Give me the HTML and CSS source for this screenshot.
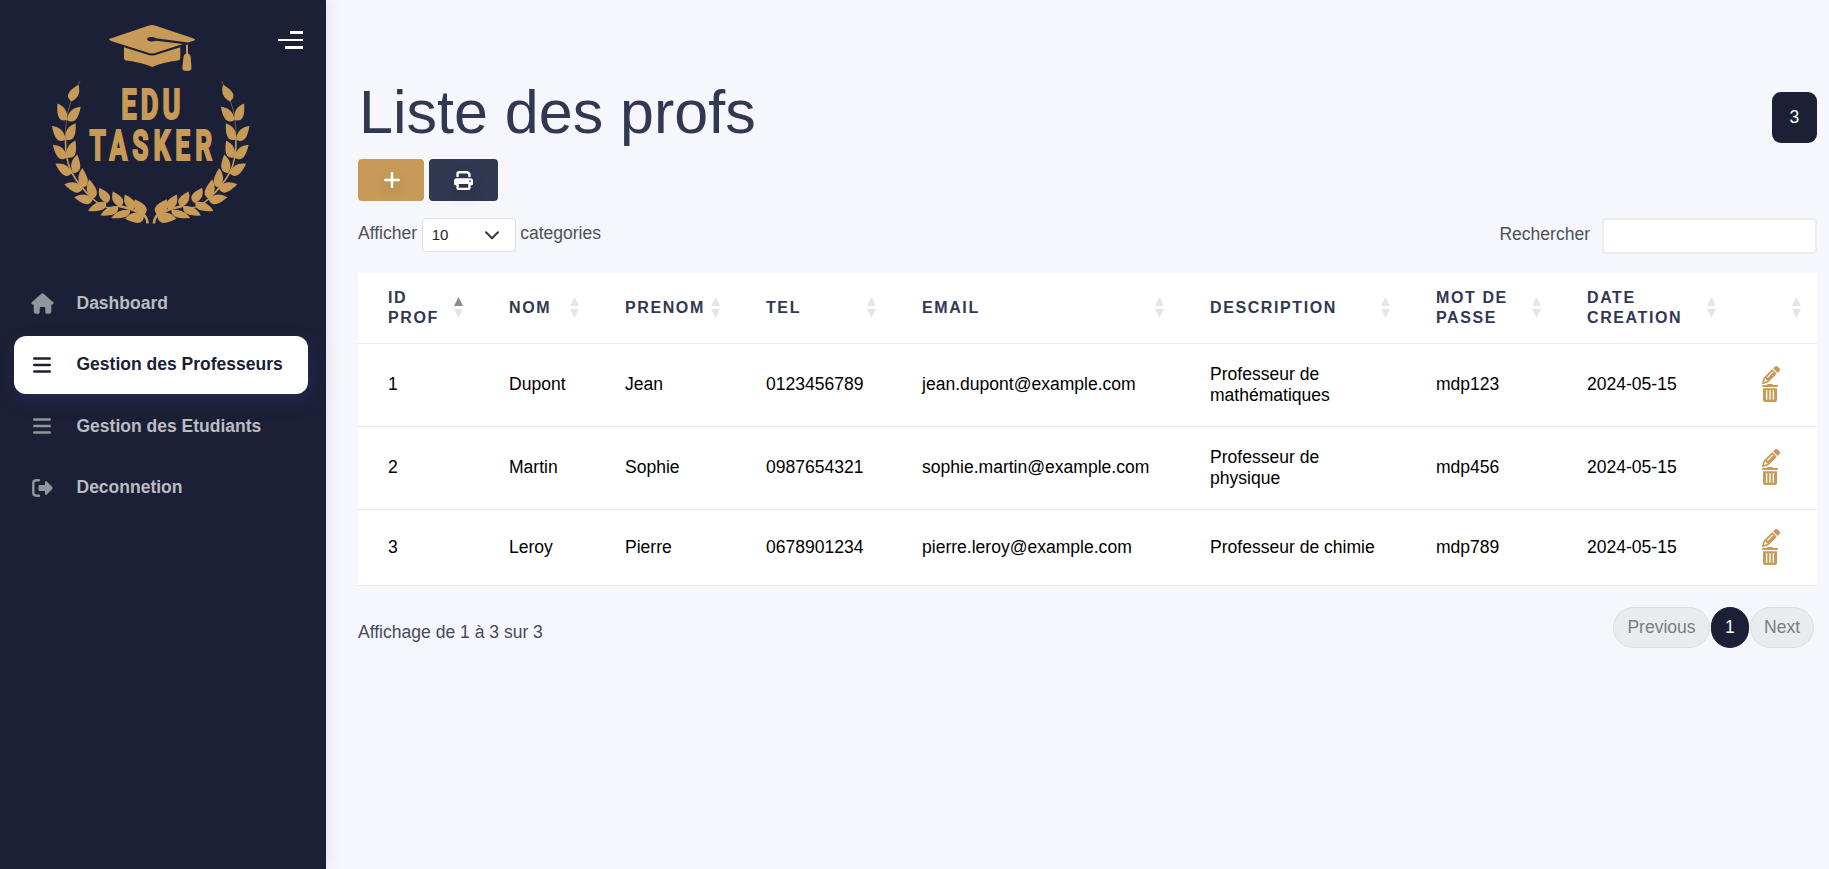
FILE: index.html
```html
<!DOCTYPE html>
<html lang="fr">
<head>
<meta charset="utf-8">
<title>Liste des profs</title>
<link rel="stylesheet" href="styles.css">
</head>
<body>
<svg class="defs" width="0" height="0">
  <defs>
    <path id="leaf" d="M0 0C-8-1.500-8-8-1-19C4-13 5-7 0 0Z"/>
    <path id="leaf-r" d="M0 0C8-1.500 8-8 1-19C-4-13-5-7 0 0Z"/>
    <g id="branch">
      <path class="stem thin" d="M80 81Q74 92 71 101T66.500 120T65.500 139"/>
      <path class="stem" d="M65.500 139Q65 160 72 173T93 199T119 206"/>
      <path class="stem thick" d="M119 206L131 209L143 214Q147.500 218 147.500 223.500"/>
      <use href="#leaf" transform="translate(71.500 101.500) rotate(26) scale(1 .95)"/>
      <use href="#leaf" transform="translate(67 120) rotate(-27)"/>
      <use href="#leaf-r" transform="translate(67 120) rotate(43)"/>
      <use href="#leaf" transform="translate(65.500 139.500) rotate(-42)"/>
      <use href="#leaf-r" transform="translate(65.500 139.500) rotate(29)"/>
      <use href="#leaf" transform="translate(67 157.500) rotate(-45)"/>
      <use href="#leaf-r" transform="translate(67 157.500) rotate(23)"/>
      <use href="#leaf" transform="translate(72 173) rotate(-58)"/>
      <use href="#leaf-r" transform="translate(73 173) rotate(10)"/>
      <use href="#leaf" transform="translate(83 188) rotate(-76)"/>
      <use href="#leaf-r" transform="translate(82 188) rotate(-2) scale(1 1.050)"/>
      <use href="#leaf" transform="translate(93 199) rotate(-82)"/>
      <use href="#leaf-r" transform="translate(92 199) rotate(-11) scale(1 1.050)"/>
      <use href="#leaf" transform="translate(106 202) rotate(-114) scale(.9 1.050)"/>
      <use href="#leaf-r" transform="translate(107 203) rotate(-30) scale(1 .9)"/>
      <use href="#leaf" transform="translate(118 206) rotate(-116) scale(.9 1.050)"/>
      <use href="#leaf-r" transform="translate(120 207) rotate(-28) scale(1 .9)"/>
      <use href="#leaf" transform="translate(130 210) rotate(-111) scale(.8 1.080)"/>
      <use href="#leaf-r" transform="translate(132 210) rotate(-28) scale(1 .9)"/>
      <use href="#leaf" transform="translate(144 215) rotate(-98) scale(1.150 1.020)"/>
      <use href="#leaf-r" transform="translate(143 216) rotate(-30) scale(1.150 .98)"/>
    </g>
    <symbol id="bars" viewBox="0 0 18 16"><path d="M1.200 1.500H16.800M1.200 8H16.800M1.200 14.500H16.800" fill="none" stroke="currentColor" stroke-width="2.400" stroke-linecap="round"/></symbol>
    <symbol id="sort" viewBox="0 0 9 21"><path d="M4.500 0L9 9H0Z"/><path fill="#e4e5ea" d="M4.500 21L9 12H0Z"/></symbol>
    <symbol id="edit" viewBox="0 0 512 512"><path d="M410.300 231l11.300-11.300-33.900-33.900-62.100-62.100-33.900-33.900-11.300 11.300-22.600 22.600L58.600 322.900c-10.400 10.400-18 23.300-22.200 37.400L1 480.700c-2.500 8.400-.2 17.500 6.100 23.700s15.300 8.500 23.700 6.100l120.300-35.400c14.100-4.200 27-11.800 37.400-22.200L387.700 253.700 410.300 231zM160 399.400l-9.100 22.700c-4 3.100-8.500 5.400-13.300 6.900L59.400 452l23-78.100c1.400-4.900 3.800-9.400 6.900-13.300l22.700-9.100v32c0 8.800 7.200 16 16 16h32zM362.700 18.700L348.300 33.200 325.700 55.800 314.300 67.100l33.900 33.900 62.100 62.100 33.900 33.900 11.300-11.300 22.600-22.600 14.500-14.500c25-25 25-65.500 0-90.500L453.300 18.700c-25-25-65.500-25-90.500 0zm-47.400 168l-144 144c-6.200 6.200-16.400 6.200-22.600 0s-6.200-16.400 0-22.600l144-144c6.200-6.200 16.400-6.200 22.600 0s6.200 16.400 0 22.600z"/></symbol>
    <symbol id="trash" viewBox="0 0 16 18"><path d="M4.800 0.700Q5 0 5.800 0H10.200Q11 0 11.200.7L11.400 1H15.300Q16 1.200 16 2T15.300 3H.7Q0 2.800 0 2T.7 1H4.600Z"/><path fill-rule="evenodd" d="M1 4.200H15V16Q15 18 13 18H3Q1 18 1 16ZM4 6.200V15.800H5.300V6.200ZM7.350 6.200V15.800H8.650V6.200ZM10.700 6.200V15.800H12V6.200Z"/></symbol>
  </defs>
</svg>
<div class="page">
  <aside class="sidebar">
    <header class="brand">
      <svg class="logo" width="326" height="240" viewBox="0 0 326 240">
        <path d="M109 39.500Q108.500 38.800 112 38L149 25.600Q152 24.500 155 25.600L193 38.200Q197 39.800 193 41L188 42.600L156 38.300Q154 36.800 150.500 37Q147 37.500 147 39.300Q148 41.800 152 41.500L156 40.800L183 44L155 53Q152 54 149 53L111 41Z"/>
        <path d="M124 47.200L149.500 55.200Q152 56 154.500 55.200L180.300 47.200V58Q180.300 60.300 178 60.500Q163 62 152.300 67Q141 62 126 60.500Q124 60.200 124 58Z"/>
        <path d="M186 45L188 44.500V53.500Q190.500 54 190.700 57L191.500 68.500Q191 71 187 71Q182.500 71 182.300 68.500L183.500 57Q183.700 54 186 53.500Z"/>
        <use href="#branch"/>
        <use href="#branch" transform="translate(301.500 0) scale(-1 1)"/>
        <text class="logo-text" transform="translate(121.300 119) scale(.64 1)">EDU</text>
        <text class="logo-text" transform="translate(89.600 160.300) scale(.62 1)" textLength="204">TASKER</text>
      </svg>
      <button class="toggle" aria-label="Menu"><span class="l1"></span><span class="l2"></span><span class="l3"></span></button>
    </header>
    <nav class="menu">
      <a class="item"><svg class="home" viewBox="0 0 23 21"><path d="M10.700.5Q11.500-.1 12.300.5L22.300 9.300Q23.200 10.800 21.800 11.400H20.300V18.500Q20.200 20.800 18 20.800H15.700Q14.300 20.800 14.300 19.300V15.300Q14.300 14 13 14H10Q8.700 14 8.700 15.300V19.300Q8.700 20.800 7.300 20.800H5Q2.800 20.800 2.700 18.500V11.400H1.200Q-.2 10.800.7 9.300Z"/></svg><span>Dashboard</span></a>
      <a class="item active"><svg class="bars"><use href="#bars"/></svg><span>Gestion des Professeurs</span></a>
      <a class="item"><svg class="bars"><use href="#bars"/></svg><span>Gestion des Etudiants</span></a>
      <a class="item"><svg class="exit" viewBox="0 0 21 18"><path d="M7 1.300H4.500Q1.300 1.300 1.300 4.500V13.500Q1.300 16.700 4.500 16.700H7" fill="none" stroke="currentColor" stroke-width="2.400" stroke-linecap="round"/><path d="M7.500 6H13V3Q13.200 1.600 14.500 2.200L20.300 8Q21 9 20.300 10L14.500 15.800Q13.200 16.400 13 15V12H7.500Q6.500 12 6.500 11V7Q6.500 6 7.500 6Z"/></svg><span>Deconnetion</span></a>
    </nav>
  </aside>
  <main class="content">
    <div class="heading">
      <h1>Liste des profs</h1>
      <span class="count">3</span>
    </div>
    <div class="actions">
      <button class="btn add" aria-label="Ajouter"><svg width="16" height="16" viewBox="0 0 16 16"><path d="M8 1.300V14.700M1.300 8H14.700" stroke="#fff" stroke-width="2.600" stroke-linecap="round"/></svg></button>
      <button class="btn print" aria-label="Imprimer"><svg width="19" height="19" viewBox="0 0 512 512"><path fill="#fff" d="M128 0C92.700 0 64 28.700 64 64v96h64V64H354.700L384 93.300V160h64V93.300c0-17-6.700-33.300-18.700-45.300L400 18.700C388 6.700 371.700 0 354.700 0H128zM384 352v32 64H128V384 368 352H384zm64 32h32c17.700 0 32-14.300 32-32V256c0-35.300-28.700-64-64-64H64c-35.300 0-64 28.700-64 64v96c0 17.700 14.300 32 32 32H64v64c0 35.300 28.700 64 64 64H384c35.300 0 64-28.700 64-64V384zM432 248a24 24 0 1 1 0 48 24 24 0 1 1 0-48z"/></svg></button>
    </div>
    <div class="filters">
      <div class="length"><span>Afficher</span>
        <div class="select"><span>10</span><svg width="14" height="9" viewBox="0 0 14 9"><path d="M1 1.200L7 7.200L13 1.200" fill="none" stroke="#343a40" stroke-width="2" stroke-linecap="round" stroke-linejoin="round"/></svg></div>
        <span>categories</span></div>
      <label class="search"><span>Rechercher</span><input type="text"></label>
    </div>
    <table class="list">
      <colgroup><col class="c1"><col class="c2"><col class="c3"><col class="c4"><col class="c5"><col class="c6"><col class="c7"><col class="c8"><col class="c9"></colgroup>
      <thead>
        <tr>
          <th><div>ID<br>PROF<svg class="sort asc"><use href="#sort"/></svg></div></th>
          <th><div>NOM<svg class="sort"><use href="#sort"/></svg></div></th>
          <th><div>PRENOM<svg class="sort"><use href="#sort"/></svg></div></th>
          <th><div>TEL<svg class="sort"><use href="#sort"/></svg></div></th>
          <th><div>EMAIL<svg class="sort"><use href="#sort"/></svg></div></th>
          <th><div>DESCRIPTION<svg class="sort"><use href="#sort"/></svg></div></th>
          <th><div>MOT DE<br>PASSE<svg class="sort"><use href="#sort"/></svg></div></th>
          <th><div>DATE<br>CREATION<svg class="sort"><use href="#sort"/></svg></div></th>
          <th><div><svg class="sort"><use href="#sort"/></svg></div></th>
        </tr>
      </thead>
      <tbody>
        <tr><td>1</td><td>Dupont</td><td>Jean</td><td>0123456789</td><td>jean.dupont@example.com</td><td>Professeur de<br>mathématiques</td><td>mdp123</td><td>2024-05-15</td><td><div class="tools"><svg class="edit"><use href="#edit"/></svg><svg class="trash"><use href="#trash"/></svg></div></td></tr>
        <tr><td>2</td><td>Martin</td><td>Sophie</td><td>0987654321</td><td>sophie.martin@example.com</td><td>Professeur de<br>physique</td><td>mdp456</td><td>2024-05-15</td><td><div class="tools"><svg class="edit"><use href="#edit"/></svg><svg class="trash"><use href="#trash"/></svg></div></td></tr>
        <tr class="short"><td>3</td><td>Leroy</td><td>Pierre</td><td>0678901234</td><td>pierre.leroy@example.com</td><td>Professeur de chimie</td><td>mdp789</td><td>2024-05-15</td><td><div class="tools"><svg class="edit"><use href="#edit"/></svg><svg class="trash"><use href="#trash"/></svg></div></td></tr>
      </tbody>
    </table>
    <footer class="foot">
      <span class="info">Affichage de 1 à 3 sur 3</span>
      <div class="pager"><span class="pg prev">Previous</span><span class="pg current">1</span><span class="pg next">Next</span></div>
    </footer>
  </main>
</div>
</body>
</html>
```

FILE: styles.css
```css
* { box-sizing: border-box; }
body { margin: 0; background: #f6f7fc; font-family: "Liberation Sans", Arial, sans-serif; font-size: 17.55px; overflow: hidden; }
.defs { position: absolute; }
.page { display: flex; height: 869px; }

.sidebar { width: 326px; flex: none; background: #1b2036; box-shadow: 0 0 16px rgba(27, 32, 54, .12); }
.brand { position: relative; height: 274px; }
.logo { display: block; fill: #c79a58; }
.stem { fill: none; stroke: #c79a58; stroke-width: 1.6; }
.stem.thin { stroke-width: .7; opacity: .7; }
.stem.thick { stroke-width: 2.6; }
.logo-text { font-family: Roboto, sans-serif; font-weight: 700; font-size: 42.5px; letter-spacing: 6.5px; stroke: #c79a58; stroke-width: 2.2; }
.toggle { position: absolute; top: 31px; right: 23px; width: 25px; padding: 0; border: 0; background: none; display: flex; flex-direction: column; align-items: flex-end; }
.toggle span { background: #fff; height: 3px; }
.toggle .l1 { width: 13px; }
.toggle .l2 { width: 25px; height: 2px; margin: 5px 0; }
.toggle .l3 { width: 18px; }

.menu { display: flex; flex-direction: column; gap: 3.5px; padding: 0 18px 0 14px; }
.item { display: grid; grid-template-columns: 55.5px 1fr; padding-left: 7px; align-items: center; height: 58px; border-radius: 12px; color: #bbbcc2; font-weight: 700; font-size: 17.5px; }
.item svg { justify-self: center; color: #8f979c; fill: currentColor; position: relative; left: -6.5px; top: 0; }
.item.active { background: #fff; color: #1b2036; box-shadow: 3px 7px 16px rgba(47, 43, 101, .55); }
.item.active svg { color: #1b2036; }
.home { width: 23px; height: 21px; }
.bars { width: 18px; height: 16px; }
.exit { width: 21px; height: 18px; }

.content { flex: 1; padding: 77px 12px 0 32px; }
.heading { display: flex; justify-content: space-between; height: 82px; }
h1 { margin: 0 0 0 1px; font-weight: 400; font-size: 61px; line-height: 70px; color: #313852; }
.count { margin-top: 15px; width: 45px; height: 51px; border-radius: 9px; background: #1b2036; color: #fff; display: flex; align-items: center; justify-content: center; padding-bottom: 1px; }
.actions { display: flex; gap: 5px; }
.btn { height: 42px; border: 0; border-radius: 4px; padding: 0; display: flex; align-items: center; justify-content: center; }
.btn svg { filter: drop-shadow(0 6px 7px rgba(0, 0, 0, .2)); }
.add { width: 66px; background: #c79a58; padding-left: 1px; }
.print { width: 69px; background: #313852; }
.filters { display: flex; justify-content: space-between; margin-top: 17px; height: 55px; color: #4d5158; }
.length { display: flex; gap: 4.5px; line-height: 30px; }
.select { width: 94px; height: 34px; background: #fff; border: 1px solid #dee2e6; border-radius: 4px; display: flex; align-items: center; justify-content: space-between; padding: 0 16px 0 9px; font-size: 15px; color: #212529; }
.search { display: flex; gap: 12px; line-height: 32px; }
.search input { width: 215px; height: 36px; background: #fff; border: 2px solid #ecedf2; border-radius: 4px; }

.list { width: 1459px; table-layout: fixed; border-collapse: separate; border-spacing: 0; background: #fff; }
.c1 { width: 121px; } .c2 { width: 116px; } .c3 { width: 141px; } .c4 { width: 156px; } .c5 { width: 288px; } .c6 { width: 226px; } .c7 { width: 151px; } .c8 { width: 175px; } .c9 { width: 85px; }
th, td { padding: 0 0 0 30px; text-align: left; vertical-align: middle; border-bottom: 1px solid #e9eaf0; white-space: nowrap; }
th { height: 71px; padding-bottom: 1px; font-size: 16px; line-height: 20px; letter-spacing: 1.6px; color: #313852; }
th div { position: relative; }
th:last-child div { height: 20px; }
.sort { position: absolute; right: 16.500px; top: 50%; margin-top: -11px; width: 9px; height: 21px; fill: #e4e5ea; }
.sort.asc { fill: #868a99; }
td { height: 83px; line-height: 21px; color: #000; padding-bottom: 1px; }
.short td { height: 76px; padding-bottom: 0; }
.tools { display: flex; flex-direction: column; fill: #c79a58; padding-bottom: 1px; }
.edit { width: 18px; height: 18px; }
.trash { width: 16px; height: 18px; }

.foot { display: flex; justify-content: space-between; padding: 21px 3px 0 0; color: #454a5c; }
.info { line-height: 50px; }
.pager { display: flex; gap: 1px; height: 41px; }
.pg { display: flex; align-items: center; justify-content: center; border: 1px solid #dcdfe2; border-radius: 21px; background: #e9ecef; color: #7a7c7f; }
.prev { width: 97px; }
.next { width: 64px; }
.current { width: 38px; background: #1b2036; border-color: #1b2036; color: #fff; }
```
